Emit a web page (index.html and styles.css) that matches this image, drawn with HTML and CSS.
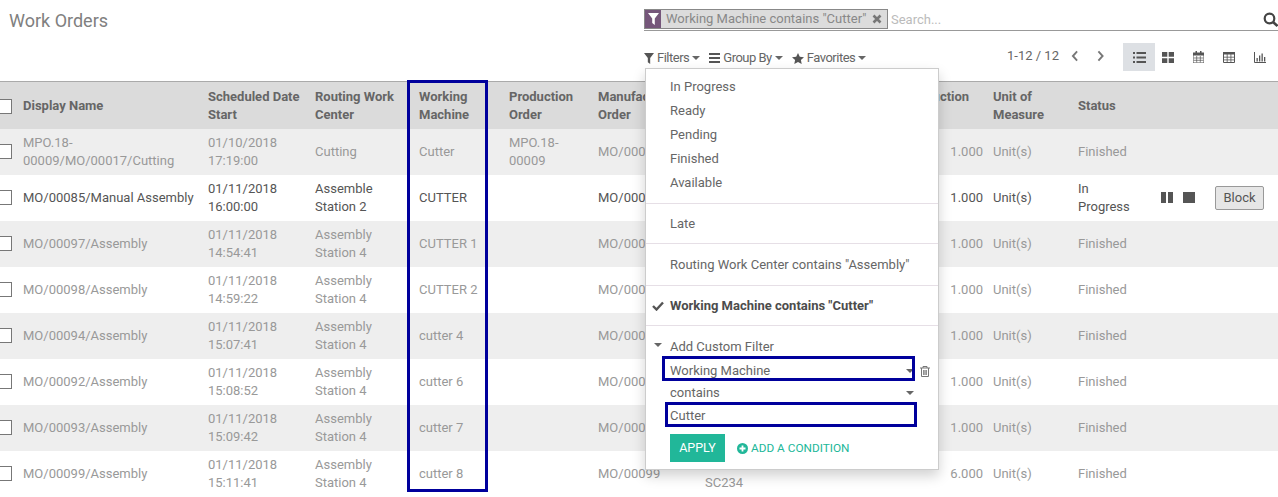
FILE: index.html
```html
<!DOCTYPE html>
<html lang="en">
  <head>
    <meta charset="UTF-8" />
    <title>Work Orders</title>
    <link rel="stylesheet" href="styles.css">
  </head>
  <body>
    <div class="page">
      <div class="control-panel">
        <h1 class="title">Work Orders</h1>
        <div class="controls">
          <div class="search-bar">
            <div class="facet">
              <span class="facet-icon">
                <svg width="11" height="12" viewBox="0 0 11 12"><path d="M0 0h11L6.800 5.500V12L4.200 10V5.500z" fill="#fff"/></svg>
              </span>
              <span class="facet-text">Working Machine contains "Cutter"</span>
              <svg class="facet-close" width="10" height="10" viewBox="0 0 10 10"><path d="M1.500 1.500l7 7M8.500 1.500l-7 7" stroke="#777" stroke-width="2.600"/></svg>
            </div>
            <span class="search-input">Search...</span>
            <svg class="search-icon" width="16" height="16" viewBox="0 0 16 16"><circle cx="6.500" cy="6.500" r="4.800" fill="none" stroke="#444" stroke-width="2.200"/><path d="M10 10l4.500 4" stroke="#444" stroke-width="2.600"/></svg>
          </div>
          <div class="button-row">
            <div class="menu-buttons">
              <span class="menu-btn">
                <svg width="10" height="11" viewBox="0 0 11 12"><path d="M0 0h11L6.800 5.500V12L4.200 10V5.500z" fill="#555"/></svg>
                Filters <i class="caret"></i>
              </span>
              <span class="menu-btn">
                <svg width="11" height="10" viewBox="0 0 11 10"><path d="M0 0h11v2H0zM0 4h11v2H0zM0 8h11v2H0z" fill="#555"/></svg>
                Group By <i class="caret"></i>
              </span>
              <span class="menu-btn">
                <svg width="12" height="11" viewBox="0 0 12 11"><path d="M6 0l1.800 3.800 4.200.500-3.100 2.800.800 3.900L6 9.100 2.300 11l.800-3.900L0 4.300l4.200-.500z" fill="#555"/></svg>
                Favorites <i class="caret"></i>
              </span>
            </div>
            <div class="pager">
              <span class="pager-value">1-12 / 12</span>
              <svg class="pager-arrow" width="8" height="12" viewBox="0 0 8 12"><path d="M6.500 1L2 6l4.500 5" fill="none" stroke="#777" stroke-width="2"/></svg>
              <svg class="pager-arrow" width="8" height="12" viewBox="0 0 8 12"><path d="M1.500 1L6 6l-4.500 5" fill="none" stroke="#777" stroke-width="2"/></svg>
            </div>
            <div class="view-switch">
              <span class="view-btn active">
                <svg width="13" height="11" viewBox="0 0 13 11"><path d="M0 0h2v2H0zM3.500 0H13v2H3.500zM0 4.500h2v2H0zM3.500 4.500H13v2H3.500zM0 9h2v2H0zM3.500 9H13v2H3.500z" fill="#555"/></svg>
              </span>
              <span class="view-btn">
                <svg width="12" height="11" viewBox="0 0 12 11"><path d="M0 0h5.300v4.800H0zM6.700 0H12v4.800H6.700zM0 6.200h5.300V11H0zM6.700 6.200H12V11H6.700z" fill="#555"/></svg>
              </span>
              <span class="view-btn">
                <svg width="11" height="12" viewBox="0 0 11 12"><path d="M0 2h11v10H0z" fill="none" stroke="#555"/><path d="M0 2h11v2.500H0zM2.500 0h1.500v3H2.500zM7 0h1.500v3H7z" fill="#555"/><path d="M3.700 5v6.500M7.300 5v6.500M.5 7h10M.5 9.300h10" stroke="#555" stroke-width=".7"/></svg>
              </span>
              <span class="view-btn">
                <svg width="12" height="11" viewBox="0 0 12 11"><path d="M.5.500h11v10H.5z" fill="none" stroke="#555"/><path d="M0 0h12v2.500H0z" fill="#555"/><path d="M4.200 2v8.500M7.900 2v8.500M.5 5.200h11M.5 7.900h11" stroke="#555" stroke-width=".8"/></svg>
              </span>
              <span class="view-btn">
                <svg width="12" height="11" viewBox="0 0 12 11"><path d="M.5 0v10.500H12" fill="none" stroke="#555"/><path d="M2.500 6h1.300v3.500H2.500zM5 3.500h1.300v6H5zM7.500 1.500h1.300v8H7.500zM10 5h1.300v4.500H10z" fill="#555"/></svg>
              </span>
            </div>
          </div>
        </div>
      </div>

      <table class="orders">
        <colgroup>
          <col class="c-check"><col class="c-name"><col class="c-date"><col class="c-center"><col class="c-machine"><col class="c-prod"><col class="c-mo"><col class="c-product"><col class="c-qty"><col class="c-uom"><col class="c-status"><col class="c-act1"><col>
        </colgroup>
        <thead>
          <tr>
            <th><span class="check"></span></th>
            <th>Display Name</th>
            <th>Scheduled Date Start</th>
            <th>Routing Work Center</th>
            <th>Working Machine</th>
            <th>Production Order</th>
            <th>Manufacturing Order</th>
            <th>Product</th>
            <th>Production Qty</th>
            <th>Unit of Measure</th>
            <th>Status</th>
            <th></th>
            <th></th>
          </tr>
        </thead>
        <tbody>
          <tr class="done">
            <td><span class="check"></span></td>
            <td>MPO.18-00009/MO/00017/Cutting</td>
            <td>01/10/2018 17:19:00</td>
            <td>Cutting</td>
            <td>Cutter</td>
            <td>MPO.18-00009</td>
            <td>MO/00017</td>
            <td></td>
            <td class="num">1.000</td>
            <td>Unit(s)</td>
            <td>Finished</td>
            <td></td>
            <td></td>
          </tr>
          <tr>
            <td><span class="check"></span></td>
            <td>MO/00085/Manual Assembly</td>
            <td>01/11/2018 16:00:00</td>
            <td>Assemble Station 2</td>
            <td>CUTTER</td>
            <td></td>
            <td>MO/00085</td>
            <td></td>
            <td class="num">1.000</td>
            <td>Unit(s)</td>
            <td>In Progress</td>
            <td>
              <div class="row-actions">
                <svg width="12" height="11" viewBox="0 0 12 11"><path d="M0 0h5v11H0zM7 0h5v11H7z" fill="#555"/></svg>
                <svg width="12" height="11" viewBox="0 0 12 11"><path d="M0 0h12v11H0z" fill="#555"/></svg>
              </div>
            </td>
            <td><button class="block-btn">Block</button></td>
          </tr>
          <tr class="done">
            <td><span class="check"></span></td>
            <td>MO/00097/Assembly</td>
            <td>01/11/2018 14:54:41</td>
            <td>Assembly Station 4</td>
            <td>CUTTER 1</td>
            <td></td>
            <td>MO/00097</td>
            <td></td>
            <td class="num">1.000</td>
            <td>Unit(s)</td>
            <td>Finished</td>
            <td></td>
            <td></td>
          </tr>
          <tr class="done">
            <td><span class="check"></span></td>
            <td>MO/00098/Assembly</td>
            <td>01/11/2018 14:59:22</td>
            <td>Assembly Station 4</td>
            <td>CUTTER 2</td>
            <td></td>
            <td>MO/00098</td>
            <td></td>
            <td class="num">1.000</td>
            <td>Unit(s)</td>
            <td>Finished</td>
            <td></td>
            <td></td>
          </tr>
          <tr class="done">
            <td><span class="check"></span></td>
            <td>MO/00094/Assembly</td>
            <td>01/11/2018 15:07:41</td>
            <td>Assembly Station 4</td>
            <td>cutter 4</td>
            <td></td>
            <td>MO/00094</td>
            <td></td>
            <td class="num">1.000</td>
            <td>Unit(s)</td>
            <td>Finished</td>
            <td></td>
            <td></td>
          </tr>
          <tr class="done">
            <td><span class="check"></span></td>
            <td>MO/00092/Assembly</td>
            <td>01/11/2018 15:08:52</td>
            <td>Assembly Station 4</td>
            <td>cutter 6</td>
            <td></td>
            <td>MO/00092</td>
            <td></td>
            <td class="num">1.000</td>
            <td>Unit(s)</td>
            <td>Finished</td>
            <td></td>
            <td></td>
          </tr>
          <tr class="done">
            <td><span class="check"></span></td>
            <td>MO/00093/Assembly</td>
            <td>01/11/2018 15:09:42</td>
            <td>Assembly Station 4</td>
            <td>cutter 7</td>
            <td></td>
            <td>MO/00093</td>
            <td></td>
            <td class="num">1.000</td>
            <td>Unit(s)</td>
            <td>Finished</td>
            <td></td>
            <td></td>
          </tr>
          <tr class="done">
            <td><span class="check"></span></td>
            <td>MO/00099/Assembly</td>
            <td>01/11/2018 15:11:41</td>
            <td>Assembly Station 4</td>
            <td>cutter 8</td>
            <td></td>
            <td>MO/00099</td>
            <td>Product<br>SC234</td>
            <td class="num">6.000</td>
            <td>Unit(s)</td>
            <td>Finished</td>
            <td></td>
            <td></td>
          </tr>
        </tbody>
      </table>

      <div class="column-mark"></div>

      <div class="filter-menu">
        <ul class="menu-group">
          <li>In Progress</li>
          <li>Ready</li>
          <li>Pending</li>
          <li>Finished</li>
          <li>Available</li>
        </ul>
        <ul class="menu-group group-late">
          <li>Late</li>
        </ul>
        <ul class="menu-group group-routing">
          <li>Routing Work Center contains "Assembly"</li>
        </ul>
        <ul class="menu-group group-machine">
          <li class="selected">
            <svg class="tick" width="12" height="10" viewBox="0 0 12 10"><path d="M1 5l3.500 3.500L11 1.500" fill="none" stroke="#555" stroke-width="2.400"/></svg>
            Working Machine contains "Cutter"
          </li>
        </ul>
        <div class="custom-filter">
          <div class="custom-title"><i class="caret custom-caret"></i>Add Custom Filter</div>
          <div class="custom-line marked">
            <span>Working Machine</span><i class="caret"></i>
            <svg class="trash" width="10" height="11" viewBox="0 0 10 11"><path d="M0 2h10M3 2V.500h4V2M1.500 2v8.500h7V2M3.700 4v5M5 4v5M6.300 4v5" fill="none" stroke="#777"/></svg>
          </div>
          <div class="custom-line line-short">
            <span>contains</span><i class="caret"></i>
          </div>
          <div class="custom-value marked">Cutter</div>
          <div class="custom-actions">
            <button class="apply-btn">APPLY</button>
            <span class="add-condition">
              <svg width="11" height="11" viewBox="0 0 11 11"><circle cx="5.500" cy="5.500" r="5.500" fill="#21b799"/><path d="M2.500 5.500h6M5.500 2.500v6" stroke="#fff" stroke-width="1.800"/></svg>
              ADD A CONDITION
            </span>
          </div>
        </div>
      </div>
    </div>
  </body>
</html>
```

FILE: styles.css
```css
*,
*::after {
  box-sizing: border-box;
}
html,
body {
  margin: 0;
  height: 100%;
  overflow: hidden;
}
body {
  font-family: Roboto, "Liberation Sans", sans-serif;
  font-size: 13px;
  line-height: 18px;
  color: #555;
  background-color: white;
}
.page {
  position: relative;
  height: 497px;
  overflow: hidden;
}

/* control panel */
.control-panel {
  display: flex;
  height: 81px;
}
.title {
  width: 644px;
  margin: 0;
  padding: 10px 0 0 9px;
  font-size: 18px;
  line-height: 22px;
  font-weight: 400;
  color: #808080;
}
.controls {
  flex: 1;
}
.search-bar {
  display: flex;
  align-items: center;
  height: 22px;
  margin-top: 9px;
  border-bottom: 1px solid #999;
}
.facet {
  display: flex;
  align-items: center;
  width: 244px;
  height: 20px;
  margin-top: -1px;
  background-color: #dcdcdc;
  border: 1px solid #888;
  color: #888;
}
.facet-icon {
  display: flex;
  align-items: center;
  justify-content: center;
  width: 16px;
  height: 18px;
  background-color: #75567a;
}
.facet-text {
  margin-left: 5px;
  white-space: nowrap;
}
.facet-close {
  margin-left: 6px;
}
.search-input {
  flex: 1;
  margin-left: 3px;
  color: #bbb;
}
.search-icon {
  margin-right: -1px;
}
.button-row {
  display: flex;
  align-items: flex-start;
  height: 28px;
  margin-top: 12px;
}
.menu-buttons {
  display: flex;
  width: 363px;
  padding-top: 6px;
  gap: 9px;
  letter-spacing: -0.5px;
  color: #666;
}
.menu-btn {
  display: flex;
  align-items: center;
  gap: 3px;
  height: 18px;
  white-space: nowrap;
}
.caret {
  display: inline-block;
  width: 0;
  height: 0;
  border-top: 4px solid #666;
  border-left: 4px solid transparent;
  border-right: 4px solid transparent;
}
.pager {
  display: flex;
  align-items: center;
  width: 116px;
  height: 26px;
  color: #666;
}
.pager-value {
  width: 66px;
  margin-right: 1px;
}
.pager-arrow {
  margin-left: 1px;
  margin-right: 18px;
}
.view-switch {
  display: flex;
}
.view-btn {
  display: flex;
  align-items: center;
  justify-content: center;
  width: 30.500px;
  height: 28px;
}
.view-btn.active {
  width: 32px;
  margin-right: -2px;
  background-color: #dde0e4;
}

/* list */
.orders {
  width: 1278px;
  table-layout: fixed;
  border-collapse: collapse;
}
.c-check { width: 18px; }
.c-name { width: 185px; }
.c-date { width: 107px; }
.c-center { width: 104px; }
.c-machine { width: 90px; }
.c-prod { width: 89px; }
.c-mo { width: 107px; }
.c-product { width: 200px; }
.c-qty { width: 88px; }
.c-uom { width: 85px; }
.c-status { width: 70px; }
.c-act1 { width: 67px; }
.orders th {
  height: 47px;
  padding: 6px 5px 4px;
  text-align: left;
  vertical-align: middle;
  font-weight: 700;
  color: #666;
  background-color: #dbdbdb;
  border-top: 1px solid #aaa;
}
.orders td {
  height: 46px;
  padding: 5px;
  vertical-align: middle;
}
.orders tbody tr:nth-child(odd) {
  background-color: #eeeeee;
}
.orders .done {
  color: #999;
}
.orders .num {
  text-align: right;
}
.check {
  display: block;
  width: 15px;
  height: 15px;
  margin-left: -8px;
  background-color: white;
  border: 1px solid #777;
}
.row-actions {
  display: flex;
  gap: 10px;
  margin-left: 13px;
}
.block-btn {
  width: 49px;
  height: 24px;
  padding: 0;
  font: inherit;
  color: #555;
  background-color: #e6e6e6;
  border: 1px solid #999;
  border-radius: 2px;
}

/* blue marks drawn on the screenshot */
.column-mark {
  position: absolute;
  left: 407px;
  top: 80px;
  width: 81px;
  height: 412px;
  border: 3px solid #00009c;
}

/* filter dropdown */
.filter-menu {
  position: absolute;
  left: 645px;
  top: 68px;
  width: 294px;
  height: 402px;
  background-color: white;
  border: 1px solid #ccc;
  box-shadow: 0 6px 12px rgba(0, 0, 0, 0.18);
  color: #666;
}
.menu-group {
  list-style: none;
  margin: 0;
  padding: 6px 0 8px;
  border-bottom: 1px solid #e6dfe6;
}
.group-late {
  padding: 8px 0 7px;
}
.group-routing {
  padding: 9px 0 8px;
}
.group-machine {
  padding: 8px 0 7px;
}
.menu-group li {
  position: relative;
  padding: 3px 24px;
  white-space: nowrap;
}
.menu-group li.selected {
  font-weight: 700;
  color: #4c4c4c;
}
.tick {
  position: absolute;
  left: 6px;
  top: 7px;
}
.custom-filter {
  padding: 12px 0 0 24px;
}
.custom-title {
  position: relative;
  height: 22px;
}
.custom-caret {
  position: absolute;
  left: -16px;
  top: 5px;
}
.custom-line {
  position: relative;
  display: flex;
  align-items: center;
  justify-content: space-between;
  width: 244px;
  height: 22px;
}
.line-short {
  height: 21px;
}
.trash {
  position: absolute;
  left: 250px;
  top: 6px;
}
.custom-line.marked::after,
.custom-value.marked::after {
  content: "";
  position: absolute;
  border: 3px solid #00009c;
}
.custom-line.marked::after {
  left: -8px;
  top: -4px;
  width: 253px;
  height: 25px;
}
.custom-value {
  position: relative;
  height: 24px;
  line-height: 25px;
}
.custom-value.marked::after {
  left: -5px;
  top: -1px;
  width: 252px;
  height: 25px;
}
.custom-actions {
  display: flex;
  align-items: center;
  gap: 12px;
  margin-top: 7px;
}
.apply-btn {
  width: 55px;
  height: 28px;
  padding: 0;
  font: inherit;
  font-size: 12.500px;
  color: white;
  background-color: #21b799;
  border: none;
}
.add-condition {
  display: flex;
  align-items: center;
  gap: 3px;
  font-size: 11.800px;
  color: #21b799;
}
```
